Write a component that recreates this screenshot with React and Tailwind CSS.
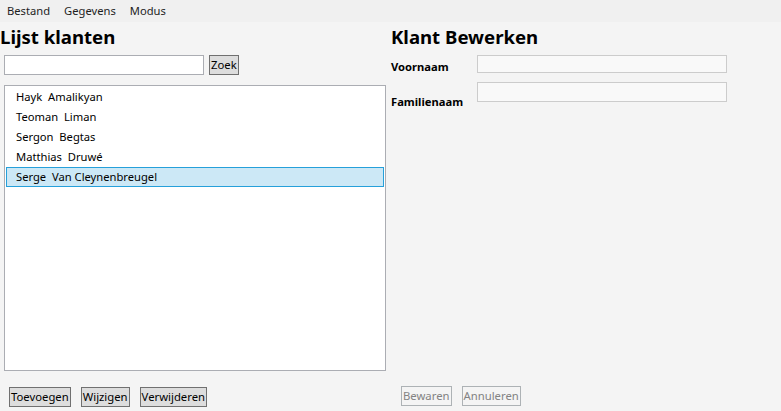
import { useState } from "react";

const klanten = [
  "Hayk  Amalikyan",
  "Teoman  Liman",
  "Sergon  Begtas",
  "Matthias  Druwé",
  "Serge  Van Cleynenbreugel",
];

function WinButton({ children, disabled, className = "" }) {
  return (
    <button
      disabled={disabled}
      className={
        "h-[20px] px-[1px] border text-[11.3px] leading-none flex items-center " +
        (disabled
          ? "bg-[#f4f4f4] border-[#adb2b5] text-[#838383]"
          : "bg-[#dddddd] border-[#707070] text-black") +
        " " +
        className
      }
    >
      {children}
    </button>
  );
}

export default function App() {
  const [selected, setSelected] = useState(4);

  return (
    <div className="w-[781px] h-[411px] bg-[#f4f4f4] flex flex-col font-['Segoe_UI','Noto_Sans',sans-serif] text-black overflow-hidden">
      {/* menu */}
      <div className="h-[22px] bg-[#f0f0f0] flex items-center gap-[14px] pl-[7px] text-[11.2px] text-[#1e1e1e]">
        <span>Bestand</span>
        <span>Gegevens</span>
        <span>Modus</span>
      </div>

      <div className="flex flex-1">
        {/* links */}
        <div className="w-[391px] flex flex-col">
          <h1 className="text-[18.6px] font-bold leading-[28px] h-[28px] mt-[1px]">Lijst klanten</h1>
          <div className="flex items-center gap-[5px] ml-[4px] mt-[4px]">
            <input className="w-[200px] h-[20px] bg-white border border-[#abadb3] outline-none" />
            <WinButton>Zoek</WinButton>
          </div>
          <div className="ml-[4px] mt-[10px] w-[382px] h-[286px] bg-white border border-[#abadb3] pt-[1px] px-[1px]">
            {klanten.map((k, i) => (
              <div
                key={k}
                onClick={() => setSelected(i)}
                className={
                  "h-[20px] pl-[9px] flex items-center text-[11.2px] whitespace-pre border " +
                  (i === selected ? "bg-[#cce8f6] border-[#26a0da]" : "border-transparent")
                }
              >
                {k}
              </div>
            ))}
          </div>
          <div className="flex gap-[10px] ml-[9px] mt-[16px]">
            <WinButton>Toevoegen</WinButton>
            <WinButton>Wijzigen</WinButton>
            <WinButton>Verwijderen</WinButton>
          </div>
        </div>

        {/* rechts */}
        <div className="flex-1 flex flex-col">
          <h1 className="text-[18.6px] font-bold leading-[28px] h-[28px] mt-[1px]">Klant Bewerken</h1>
          <div className="flex items-start mt-[4px]">
            <span className="w-[86px] text-[11.2px] font-bold mt-[4px]">Voornaam</span>
            <input disabled className="w-[250px] h-[18px] bg-[#f9f9f9] border border-[#cccccc]" />
          </div>
          <div className="flex items-start mt-[6px]">
            <span className="w-[86px] text-[11.2px] font-bold mt-[12px]">Familienaam</span>
            <input disabled className="w-[250px] h-[20px] bg-[#f9f9f9] border border-[#cccccc]" />
          </div>
          <div className="flex gap-[10px] ml-[10px] mt-auto mb-[5px]">
            <WinButton disabled>Bewaren</WinButton>
            <WinButton disabled>Annuleren</WinButton>
          </div>
        </div>
      </div>
    </div>
  );
}
